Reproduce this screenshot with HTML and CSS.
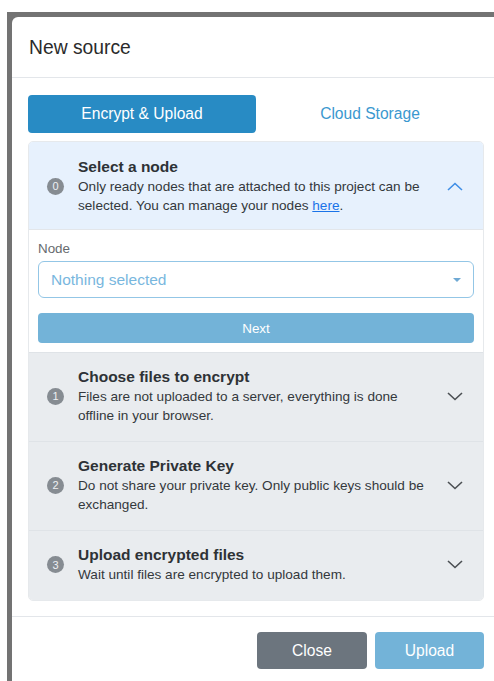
FILE: index.html
```html
<!DOCTYPE html>
<html lang="en">
<head>
<meta charset="utf-8">
<title>New source</title>
<link rel="stylesheet" href="styles.css">
</head>
<body>
<div class="screen">
  <div class="backdrop">
    <div class="modal">
      <div class="modal-header">
        <h5 class="modal-title">New source</h5>
      </div>
      <div class="modal-body">
        <nav class="tabs">
          <a class="tab active">Encrypt &amp; Upload</a>
          <a class="tab">Cloud Storage</a>
        </nav>

        <div class="accordion">
          <section class="step open">
            <div class="step-head">
              <span class="badge">0</span>
              <div class="step-text">
                <div class="step-title">Select a node</div>
                <div class="step-desc">Only ready nodes that are attached to this project can be selected. You can manage your nodes <a class="link">here</a>.</div>
              </div>
              <svg class="chevron" width="16" height="9" viewBox="0 0 16 9"><path d="M1 8 L8 1.5 L15 8" fill="none" stroke="currentColor" stroke-width="1.6"/></svg>
            </div>
            <div class="step-body">
              <label class="field-label">Node</label>
              <div class="select">
                <span class="placeholder">Nothing selected</span>
                <span class="caret"></span>
              </div>
              <button class="btn btn-next">Next</button>
            </div>
          </section>

          <section class="step">
            <div class="step-head">
              <span class="badge">1</span>
              <div class="step-text">
                <div class="step-title">Choose files to encrypt</div>
                <div class="step-desc">Files are not uploaded to a server, everything is done offline in your browser.</div>
              </div>
              <svg class="chevron" width="16" height="9" viewBox="0 0 16 9"><path d="M1 1 L8 7.5 L15 1" fill="none" stroke="currentColor" stroke-width="1.6"/></svg>
            </div>
          </section>

          <section class="step">
            <div class="step-head">
              <span class="badge">2</span>
              <div class="step-text">
                <div class="step-title">Generate Private Key</div>
                <div class="step-desc">Do not share your private key. Only public keys should be exchanged.</div>
              </div>
              <svg class="chevron" width="16" height="9" viewBox="0 0 16 9"><path d="M1 1 L8 7.5 L15 1" fill="none" stroke="currentColor" stroke-width="1.6"/></svg>
            </div>
          </section>

          <section class="step">
            <div class="step-head">
              <span class="badge">3</span>
              <div class="step-text">
                <div class="step-title">Upload encrypted files</div>
                <div class="step-desc">Wait until files are encrypted to upload them.</div>
              </div>
              <svg class="chevron" width="16" height="9" viewBox="0 0 16 9"><path d="M1 1 L8 7.5 L15 1" fill="none" stroke="currentColor" stroke-width="1.6"/></svg>
            </div>
          </section>
        </div>
      </div>
      <div class="modal-footer">
        <button class="btn btn-close">Close</button>
        <button class="btn btn-upload">Upload</button>
      </div>
    </div>
  </div>
</div>
</body>
</html>
```

FILE: styles.css
```css
* { box-sizing: border-box; }

html, body {
  margin: 0;
  height: 100%;
  overflow: hidden;
  background: #fff;
  font-family: "Liberation Sans", Arial, sans-serif;
  color: #212529;
}

.screen {
  padding: 12px 0 0 7px;
  height: 100%;
}

/* dimmed page behind the dialog */
.backdrop {
  background: #737373;
  padding: 5px 0 0 5px;
  height: 100%;
  width: 520px;
}

.modal {
  background: #fff;
  width: 488px;
  height: 100%;
  border-radius: 6px 6px 0 0;
}

.modal-header {
  height: 61px;
  padding: 0 17px;
  display: flex;
  align-items: center;
  border-bottom: 1px solid #e3e6ea;
}

.modal-title {
  margin: 0;
  font-size: 19.3px;
  font-weight: normal;
  color: #2b2b2b;
  padding-top: 1px;
}

.modal-body {
  padding: 17px 16px 15px;
  border-bottom: 1px solid #e3e6ea;
}

.tabs {
  display: flex;
  margin-bottom: 8px;
}

.tab {
  flex: 1;
  height: 38px;
  padding-bottom: 1px;
  display: flex;
  align-items: center;
  justify-content: center;
  font-size: 15.6px;
  color: #3b98cf;
  border-radius: 4px;
}

.tab.active {
  background: #288bc4;
  color: #fff;
}

.accordion {
  border: 1px solid #e6e9ec;
  border-radius: 5px;
  overflow: hidden;
}

.step + .step { border-top: 1px solid #dfe3e7; }

.step-head {
  display: flex;
  align-items: center;
  background: #e9ecef;
  padding: 14px 20px 16px 18px;
}

.step.open .step-head {
  background: #e7f1fd;
  padding: 15px 20px 14px 18px;
}

.badge {
  flex: none;
  width: 17px;
  height: 17px;
  border-radius: 50%;
  background: #868c92;
  color: #eef0f2;
  font-size: 11px;
  display: flex;
  align-items: center;
  justify-content: center;
  margin-right: 14px;
}

.step-text {
  flex: 1;
  padding-right: 14px;
}

.step-title {
  font-size: 15.5px;
  font-weight: bold;
  color: #2e3236;
  line-height: 20px;
}

.step-desc {
  font-size: 13.6px;
  line-height: 19px;
  color: #34383c;
}

.link {
  color: #1a73e8;
  text-decoration: underline;
}

.chevron {
  flex: none;
  color: #4b4f53;
}

.step.open .chevron { color: #3f8ee6; }

.step-body {
  background: #fff;
  padding: 11px 9px 9px;
  border-top: 1px solid #e3e6ea;
}

.field-label {
  display: block;
  font-size: 13.4px;
  color: #666a6e;
  line-height: 16px;
  margin-bottom: 4px;
}

.select {
  height: 37px;
  border: 1px solid #93c6e6;
  border-radius: 6px;
  display: flex;
  align-items: center;
  justify-content: space-between;
  padding: 0 12px;
}

.placeholder {
  font-size: 15.5px;
  color: #79b7de;
}

.caret {
  width: 0;
  height: 0;
  border-left: 4px solid transparent;
  border-right: 4px solid transparent;
  border-top: 4px solid #6fa9d4;
}

.btn {
  border: 0;
  font-family: inherit;
  color: #fff;
  border-radius: 4px;
  cursor: pointer;
}

.btn-next {
  display: block;
  width: 100%;
  height: 30px;
  margin-top: 15px;
  background: #73b3d8;
  font-size: 13.4px;
}

.modal-footer {
  display: flex;
  justify-content: flex-end;
  gap: 8px;
  padding: 15px 16px;
}

.btn-close, .btn-upload {
  height: 37px;
  font-size: 15.6px;
}

.btn-close {
  width: 110px;
  background: #6c757e;
}

.btn-upload {
  width: 109px;
  background: #73b3d8;
}
```
